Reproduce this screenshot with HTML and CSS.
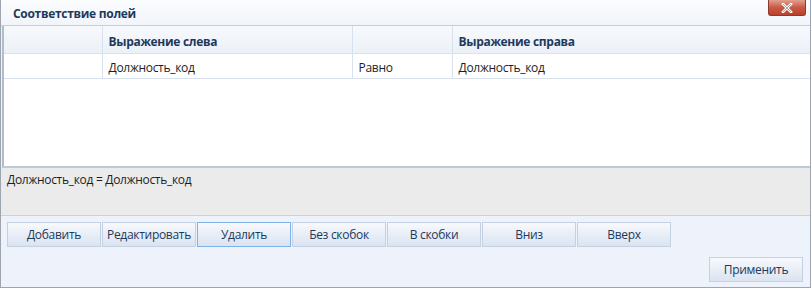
FILE: index.html
```html
<!DOCTYPE html>
<html lang="ru">
<head>
    <meta charset="UTF-8">
    <title>Соответствие полей</title>
    <link rel="stylesheet" href="styles.css">
</head>
<body>
    <div class="window">
        <div class="titlebar">
            <span class="title">Соответствие полей</span>
            <span class="close">
                <svg width="14" height="10" viewBox="0 0 14 10">
                    <path d="M3 1 L11 9 M11 1 L3 9" stroke="#fff" stroke-width="2.6" stroke-linecap="square"/>
                    <path d="M3 1 L11 9 M11 1 L3 9" stroke="#8a8a8a" stroke-width="0.8"/>
                </svg>
            </span>
        </div>

        <div class="grid">
            <table>
                <tr class="head">
                    <th class="c1"></th>
                    <th class="c2">Выражение слева</th>
                    <th class="c3"></th>
                    <th>Выражение справа</th>
                </tr>
                <tr>
                    <td></td>
                    <td>Должность_код</td>
                    <td>Равно</td>
                    <td>Должность_код</td>
                </tr>
            </table>
        </div>

        <div class="summary">Должность_код = Должность_код</div>

        <div class="panel">
            <div class="buttons">
                <button class="button">Добавить</button>
                <button class="button">Редактировать</button>
                <button class="button active">Удалить</button>
                <button class="button">Без скобок</button>
                <button class="button">В скобки</button>
                <button class="button">Вниз</button>
                <button class="button">Вверх</button>
            </div>
            <div class="apply-row">
                <button class="button">Применить</button>
            </div>
        </div>
    </div>
</body>
</html>
```

FILE: styles.css
```css
body {
    margin: 0;
    font-family: "Open Sans", "Noto Sans", sans-serif;
    font-size: 12px;
    background-color: #fff;
}
.window {
    width: 811px;
    height: 288px;
    box-sizing: border-box;
    border: 1px solid #9da6b0;
    border-top: none;
    background-color: #eef3fb;
    display: flex;
    flex-direction: column;
}
.titlebar {
    height: 25px;
    flex: none;
    display: flex;
    justify-content: space-between;
    align-items: flex-start;
    background: linear-gradient(#fbfcfe, #f1f5fa);
    border-bottom: 1px solid #c5ced9;
}
.title {
    font-weight: bold;
    color: #1e395b;
    padding: 5px 0 0 12px;
    letter-spacing: -0.3px;
}
.close {
    width: 38px;
    height: 16px;
    margin-right: 4px;
    display: flex;
    align-items: center;
    justify-content: center;
    background: linear-gradient(#e2a08e, #c75a44 50%, #b9402b);
    border: 1px solid #8b3a2c;
    border-top: none;
    border-radius: 0 0 3px 3px;
    box-sizing: border-box;
}
.grid {
    height: 142px;
    flex: none;
    box-sizing: border-box;
    margin-left: 1px;
    border-left: 2px solid #b3bdc8;
    border-bottom: 2px solid #bccada;
    background-color: #fff;
}
table {
    width: 100%;
    border-collapse: collapse;
}
th, td {
    padding: 4px 0 0 6px;
    box-sizing: border-box;
    text-align: left;
    border-right: 1px solid #d8e2ee;
    border-bottom: 1px solid #d8e2ee;
    letter-spacing: -0.3px;
}
th:last-child, td:last-child {
    border-right: none;
}
th {
    height: 27px;
    font-weight: bold;
    color: #1e395b;
    background: linear-gradient(#f7f9fc, #ebf1f8);
}
td {
    height: 25px;
    color: #1e1e1e;
}
.c1 { width: 98px; }
.c2 { width: 250px; }
.c3 { width: 100px; }
.summary {
    height: 48px;
    flex: none;
    padding: 3px 0 0 6px;
    box-sizing: border-box;
    background-color: #ebebeb;
    color: #1e1e1e;
    border-bottom: 1px solid #c8d2de;
    letter-spacing: -0.3px;
}
.panel {
    flex: 1;
    padding: 6px 6px 0 6px;
}
.buttons {
    display: flex;
    gap: 1px;
}
.button {
    width: 94px;
    height: 25px;
    padding: 0;
    font-family: inherit;
    font-size: 12px;
    color: #1e395b;
    letter-spacing: -0.3px;
    background: linear-gradient(#f7f9fc, #e8eef7 50%, #dae4f1);
    border: 1px solid #c3d1e2;
    border-radius: 0;
}
.button.active {
    border-color: #7fb2e8;
}
.apply-row {
    display: flex;
    justify-content: flex-end;
    margin-top: 10px;
    padding-right: 1px;
}
```
